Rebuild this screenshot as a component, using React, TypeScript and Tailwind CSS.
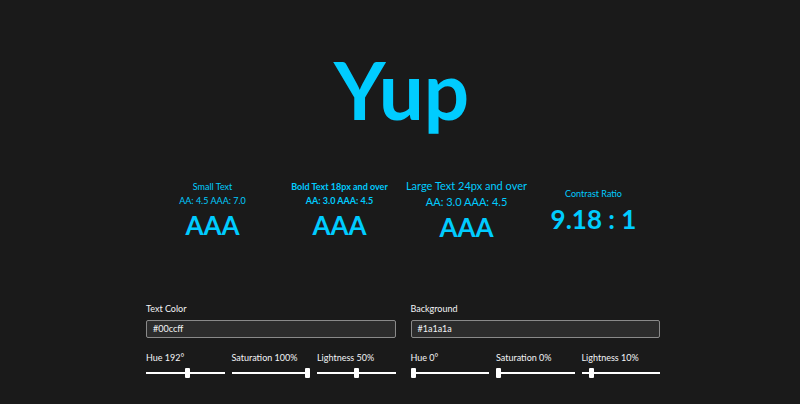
const font = { fontFamily: 'Lato, "Open Sans", sans-serif' }

function Slider({ label, value }: { label: string; value: number }) {
  return (
    <div className="flex-1">
      <div className="text-[9px] leading-[14px] text-gray-100 mb-[3px]">{label}</div>
      <div className="relative h-[10px] flex items-center">
        <div className="h-[2px] w-full bg-white" />
        <div
          className="absolute top-0 h-[10px] w-[5px] rounded-[1px] bg-white"
          style={{ left: `calc(${value} * (100% - 5px))` }}
        />
      </div>
    </div>
  )
}

function ColorBlock({ label, hex, sliders }: { label: string; hex: string; sliders: [string, number][] }) {
  return (
    <div className="flex-1">
      <div className="text-[9px] leading-[14px] text-gray-100 mb-[4px]">{label}</div>
      <div className="h-[18px] border border-[#8a8a8a] rounded-[2px] bg-[#2c2c2c] text-[9px] leading-[16px] text-gray-100 px-[6px]">
        {hex}
      </div>
      <div className="flex gap-[7px] mt-[13px]">
        {sliders.map(([l, v]) => (
          <Slider key={l} label={l} value={v} />
        ))}
      </div>
    </div>
  )
}

export default function App() {
  return (
    <div className="w-[800px] h-[404px] bg-[#1a1a1a] text-[#00ccff] overflow-hidden" style={font}>
      <h1 className="text-center font-bold text-[80px] leading-none pt-[49px] pl-[3px]">Yup</h1>

      {/* ratings */}
      <div className="ml-[149px] w-[508px] mt-[49px] grid grid-cols-4 items-center text-center whitespace-nowrap">
        <div>
          <p className="text-[9px] leading-[14px]">Small Text</p>
          <p className="text-[9px] leading-[14px]">AA: 4.5 AAA: 7.0</p>
          <p className="text-[26px] font-bold leading-[32px] mt-[1px]">AAA</p>
        </div>
        <div>
          <p className="text-[9px] leading-[14px] font-bold">Bold Text 18px and over</p>
          <p className="text-[9px] leading-[14px] font-bold">AA: 3.0 AAA: 4.5</p>
          <p className="text-[26px] font-bold leading-[32px] mt-[1px]">AAA</p>
        </div>
        <div>
          <p className="text-[11px] leading-[16px]">Large Text 24px and over</p>
          <p className="text-[11px] leading-[16px]">AA: 3.0 AAA: 4.5</p>
          <p className="text-[26px] font-bold leading-[32px] mt-[1px]">AAA</p>
        </div>
        <div>
          <p className="text-[9px] leading-[14px]">Contrast Ratio</p>
          <p className="text-[26px] font-bold leading-[32px] mt-[2px]">9.18 : 1</p>
        </div>
      </div>

      {/* colour inputs */}
      <div className="ml-[146px] w-[514px] mt-[59px] flex gap-[15px]">
        <ColorBlock
          label="Text Color"
          hex="#00ccff"
          sliders={[
            ['Hue 192°', 192 / 360],
            ['Saturation 100%', 1],
            ['Lightness 50%', 0.5],
          ]}
        />
        <ColorBlock
          label="Background"
          hex="#1a1a1a"
          sliders={[
            ['Hue 0°', 0],
            ['Saturation 0%', 0],
            ['Lightness 10%', 0.1],
          ]}
        />
      </div>
    </div>
  )
}
